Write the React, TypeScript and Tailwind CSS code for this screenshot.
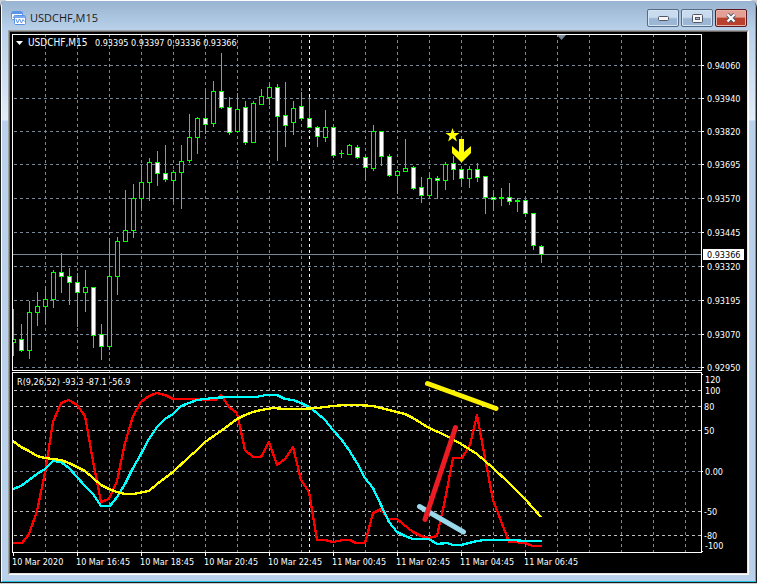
import { clsx } from 'clsx';

type Candle = [high: number, bodyTop: number, bodyBottom: number, low: number, filled: 0 | 1];

const GRID = '#778899';
const LIME = '#00ff00';

// One candle every 8px, starting at x = 13
const candles: Candle[] = [
  [309, 339, 342, 355, 0], [324, 339, 350, 351, 1], [301, 312, 350, 358, 0], [292, 306, 312, 325, 0],
  [286, 299, 306, 323, 0], [270, 272, 299, 307, 0], [253, 272, 276, 292, 1], [268, 276, 282, 304, 1],
  [273, 282, 292, 326, 1], [270, 287, 292, 311, 0], [287, 287, 335, 347, 1], [324, 334, 346, 359, 1],
  [238, 276, 346, 349, 0], [237, 241, 276, 294, 0], [190, 230, 241, 241, 0], [184, 198, 230, 237, 0],
  [165, 182, 198, 207, 0], [158, 162, 182, 200, 0], [151, 162, 173, 185, 1], [145, 173, 179, 181, 1],
  [170, 172, 180, 201, 0], [145, 161, 172, 208, 0], [114, 137, 160, 162, 0], [117, 118, 137, 153, 0],
  [90, 118, 124, 133, 1], [81, 91, 123, 126, 0], [53, 91, 107, 108, 1], [97, 107, 132, 134, 1],
  [93, 109, 131, 132, 0], [101, 107, 142, 144, 1], [101, 103, 142, 142, 0], [89, 96, 104, 104, 0],
  [84, 87, 97, 104, 0], [84, 87, 116, 160, 1], [82, 115, 125, 146, 1], [101, 108, 122, 134, 0],
  [92, 106, 118, 120, 1], [97, 118, 127, 127, 1], [126, 127, 136, 146, 1], [110, 127, 137, 141, 0],
  [126, 127, 155, 157, 1], [150, 153, 153, 157, 0], [144, 145, 154, 154, 0], [145, 147, 157, 158, 1],
  [155, 157, 167, 180, 1], [125, 131, 168, 170, 0], [131, 131, 156, 165, 1], [154, 156, 175, 176, 1],
  [170, 171, 175, 193, 0], [139, 168, 171, 171, 0], [166, 167, 188, 189, 1], [177, 187, 195, 202, 1],
  [173, 178, 195, 197, 0], [176, 178, 180, 198, 1], [162, 164, 180, 189, 0], [156, 163, 169, 179, 1],
  [167, 169, 178, 185, 1], [166, 169, 178, 187, 0], [163, 169, 177, 181, 1], [176, 176, 197, 213, 1],
  [193, 197, 199, 210, 1], [188, 197, 198, 205, 1], [183, 197, 201, 204, 1], [198, 200, 201, 211, 1],
  [199, 200, 213, 216, 1], [213, 213, 245, 249, 1], [245, 246, 254, 262, 1],
];

const prices = [
  { y: 65, label: '0.94060' },
  { y: 98, label: '0.93940' },
  { y: 131, label: '0.93820' },
  { y: 164, label: '0.93695' },
  { y: 198, label: '0.93570' },
  { y: 232, label: '0.93445' },
  { y: 266, label: '0.93320' },
  { y: 300, label: '0.93195' },
  { y: 334, label: '0.93070' },
  { y: 367, label: '0.92950' },
];

const levels = [
  { y: 390, color: '#c0c0c0' },
  { y: 406, color: '#c0c0c0' },
  { y: 430, color: '#c0c0c0' },
  { y: 471, color: GRID },
  { y: 511, color: '#c0c0c0' },
  { y: 535, color: '#c0c0c0' },
];

const levelLabels = [
  { x: 705, y: 379, label: '120' },
  { x: 705, y: 390, label: '100' },
  { x: 704, y: 406, label: '80' },
  { x: 704, y: 430, label: '50' },
  { x: 705, y: 471, label: '0.00' },
  { x: 704, y: 511, label: '-50' },
  { x: 704, y: 535, label: '-80' },
  { x: 705, y: 545, label: '-100' },
];

const times = [
  '10 Mar 2020', '10 Mar 16:45', '10 Mar 18:45', '10 Mar 20:45', '10 Mar 22:45',
  '11 Mar 00:45', '11 Mar 02:45', '11 Mar 04:45', '11 Mar 06:45',
];

const verticals = Array.from({ length: 21 }, (_, i) => 45 + i * 32);

const redLine =
  '13,543 22,543 29,534 37,511 45,473 53,422 61,403 69,400 77,405 85,416 93,461 101,502 109,499 117,481 125,443 133,416 141,402 149,396 157,393 165,395 173,399 197,399 205,400 216,400 221,395 229,407 237,413 245,450 253,457 261,457 269,442 277,465 285,459 293,447 301,480 309,492 317,540 325,540 333,542 343,540 350,540 356,543 365,543 373,513 381,509 388,519 397,519 403,524 413,532 421,536 429,538 437,536 445,500 453,458 462,458 470,445 477,415 485,458 493,500 509,542 515,542 525,543 533,546 542,546';
const cyanLine =
  '13,489 21,486 29,480 37,474 45,469 53,461 61,462 69,468 77,477 85,486 93,494 101,506 110,506 117,497 125,484 133,468 141,454 149,439 157,427 165,419 173,414 181,406 197,400 213,398 229,397 256,397 266,395 277,395 285,399 293,400 301,403 309,407 317,413 325,420 333,430 341,439 349,450 357,463 365,478 373,488 381,505 389,522 397,532 405,536 413,539 429,539 437,544 447,543 453,545 461,545 477,541 485,540 513,540 525,541 542,541';
const yellowLine =
  '13,441 21,447 29,451 37,456 45,458 61,460 69,463 77,467 85,471 93,478 101,485 109,489 117,492 125,494 133,494 149,491 157,484 165,478 173,472 189,457 197,450 205,442 221,431 237,419 245,415 253,412 261,410 273,408 285,409 301,409 317,408 333,406 345,405 357,405 373,406 381,408 389,410 397,412 405,414 413,418 421,423 429,428 445,435 461,444 477,454 493,468 509,483 525,499 541,517';

const chartText = "fill-white font-['DejaVu_Sans_Condensed','Noto_Sans',sans-serif] text-[9px]";

/**
 * VerticalGrid - dashed time lines plus the white day separator
 */
function VerticalGrid() {
  return (
    <g shapeRendering="crispEdges" strokeDasharray="3 3">
      {verticals.map((x) => (
        <path key={x} d={`M${x + 0.5} 34V552`} stroke={GRID} />
      ))}
      <path d="M309.5 34V552" stroke="#fff" />
    </g>
  );
}

function CandleBar({ candle, x }: { candle: Candle; x: number }) {
  const [high, top, bottom, low, filled] = candle;
  const height = bottom - top + 1;

  return (
    <g>
      <rect x={x} y={high} width="1" height={low - high + 1} fill={LIME} />
      <rect x={x - 2} y={top} width="5" height={height} fill={LIME} />
      {height > 2 && (
        <rect x={x - 1} y={top + 1} width="3" height={height - 2} fill={filled ? '#fff' : '#000'} />
      )}
    </g>
  );
}

/**
 * PriceChart - candles, price scale and signal marks
 */
function PriceChart() {
  return (
    <svg viewBox="10 32 737 340" className="block h-auto w-full" role="img" aria-label="USDCHF,M15">
      <defs>
        <clipPath id="pricePlot">
          <rect x="13" y="34" width="688" height="336" />
        </clipPath>
      </defs>
      <VerticalGrid />
      <g shapeRendering="crispEdges">
        {prices.map(({ y }) => (
          <path key={y} d={`M14 ${y + 0.5}H701`} stroke={GRID} strokeDasharray="3 3" />
        ))}
        <path d="M13 254.5H701" stroke={GRID} />
        <g clipPath="url(#pricePlot)">
          {candles.map((candle, i) => (
            <CandleBar key={i} candle={candle} x={13 + i * 8} />
          ))}
        </g>
        <rect x="12.5" y="34.5" width="689" height="336" fill="none" stroke="#fff" />
        {prices.map(({ y }) => (
          <path key={y} d={`M702 ${y + 0.5}h2`} stroke="#fff" />
        ))}
        <rect x="703" y="249" width="41" height="11" fill="#fff" />
      </g>

      <path d="M557 35h9l-4.500 5z" fill={GRID} />
      <path d="M557 40h1v3h-1z" fill={GRID} />
      <path d="M16 41h7l-3.500 4z" fill="#fff" />

      {/* Sell signal */}
      <path
        d="M452.500 128l1.700 5h5.300l-4.200 3.200 1.600 5.300-4.400-3.200-4.400 3.200 1.600-5.300-4.200-3.200h5.300z"
        fill="#ff0"
      />
      <path d="M459 139h5v13l7-6v7l-9.500 9.500L452 153v-7l7 6z" fill="#ff0" />

      <text x="28" y="46" className={clsx(chartText, 'text-[10px]!')}>USDCHF,M15</text>
      <text x="95" y="46" className={chartText}>0.93395 0.93397 0.93336 0.93366</text>
      {prices.map(({ y, label }) => (
        <text key={label} x="707" y={y + 4} className={chartText}>{label}</text>
      ))}
      <text x="707" y="258" className={clsx(chartText, 'fill-black!')}>0.93366</text>
    </svg>
  );
}

/**
 * OscillatorChart - R(9,26,52) lines with the time scale below
 */
function OscillatorChart() {
  return (
    <svg viewBox="10 372 737 201" className="block h-auto w-full" role="img" aria-label="R(9,26,52)">
      <VerticalGrid />
      <g shapeRendering="crispEdges">
        {levels.map(({ y, color }) => (
          <path key={y} d={`M14 ${y + 0.5}H701`} stroke={color} strokeDasharray="3 3" />
        ))}
        <g fill="none" strokeWidth="2.300" strokeLinejoin="round">
          <polyline points={redLine} stroke="#f00" />
          <polyline points={cyanLine} stroke="#0ff" />
          <polyline points={yellowLine} stroke="#ff0" />
        </g>
        <rect x="12.5" y="372.5" width="689" height="180" fill="none" stroke="#fff" />
        <path d="M702 374.500h1M702 471.500h1M702 551.500h1" stroke="#fff" />
        {times.map((time, i) => (
          <path key={time} d={`M${13.5 + i * 64} 553v3`} stroke="#fff" />
        ))}
      </g>

      {/* Hand-drawn divergence marks */}
      <g strokeWidth="5" strokeLinecap="round">
        <path d="M427.500 383.500L496 408.500" stroke="#fff200" />
        <path d="M419.500 506.500L463.500 532" stroke="#99d9ea" />
        <path d="M425 519.500L455.500 427.500" stroke="#ed1c24" />
      </g>

      <text x="17" y="385" className={chartText}>R(9,26,52) -93.3 -87.1 -56.9</text>
      {levelLabels.map(({ x, y, label }) => (
        <text key={label} x={x} y={y + 4} className={chartText}>{label}</text>
      ))}
      {times.map((time, i) => (
        <text key={time} x={12 + i * 64} y="565" className={chartText}>{time}</text>
      ))}
    </svg>
  );
}

function ChartIcon() {
  return (
    <svg width="15" height="14" viewBox="0 0 15 14" aria-hidden="true">
      <rect x=".5" y=".5" width="11" height="8" rx="1" fill="#fff" stroke="#5b93e6" />
      <path d="M1 2h10" stroke="#5b93e6" strokeWidth="2" />
      <path d="M2 7l2-3 2 3" fill="none" stroke="#5b93e6" />
      <rect x="3.500" y="4.500" width="11" height="9" rx="1" fill="#fff" stroke="#5b93e6" />
      <path d="M4 6h10" stroke="#78a8ee" strokeWidth="2" />
      <path d="M5 8l1.500 4L8.500 8l2 4 1.500-3.500 1.500 2" fill="none" stroke="#5b93e6" />
    </svg>
  );
}

const frameButton =
  'flex h-[18px] w-8 items-center justify-center rounded-[2px] border border-[#566b84] bg-linear-to-b from-[#c9dbee] from-45% to-[#9bb7d5] to-55% shadow-[inset_0_0_0_1px_#d5e4f3]';

function TitleBar() {
  return (
    <header className="flex h-[29px] items-center bg-linear-to-b from-[#99b4d1] to-[#b9d1ea] pt-[5px] pr-2 pl-[9px]">
      <ChartIcon />
      <h1 className="ml-1 flex-1 font-['Open_Sans','Noto_Sans',sans-serif] text-[11px] text-[#1b1b1b]">USDCHF,M15</h1>
      <div className="flex gap-[2px]">
        <button type="button" aria-label="Minimize" className={frameButton}>
          <svg width="11" height="6" viewBox="0 0 11 6">
            <rect x=".5" y="1.500" width="10" height="4" rx="1" fill="#f6f6f6" stroke="#535666" />
          </svg>
        </button>
        <button type="button" aria-label="Maximize" className={frameButton}>
          <svg width="11" height="9" viewBox="0 0 11 9">
            <rect x=".5" y=".5" width="10" height="8" rx="1" fill="#f6f6f6" stroke="#535666" />
            <rect x="3.500" y="3.500" width="4" height="2" fill="#a9c1dc" stroke="#535666" />
          </svg>
        </button>
        <button
          type="button"
          aria-label="Close"
          className="flex h-[18px] w-8 items-center justify-center rounded-[2px] border border-[#5a1a20] bg-linear-to-b from-[#e3a094] from-45% to-[#b8402c] to-50% shadow-[inset_0_0_0_1px_#e9b0a6]"
        >
          <svg width="12" height="10" viewBox="0 0 12 10">
            <path d="M2.500 1.500l7 7M9.500 1.500l-7 7" stroke="#535666" strokeWidth="4" />
            <path d="M2.500 1.500l7 7M9.500 1.500l-7 7" stroke="#fff" strokeWidth="2.200" />
          </svg>
        </button>
      </div>
    </header>
  );
}

export default function App() {
  return (
    <div className="bg-[#c9ced3] pb-px">
      <main className="rounded-t-lg border border-t-0 border-[#1c1c1c] bg-[#b9d1ea]">
        <div className="rounded-t-md border-t border-r border-b border-l border-t-white border-r-[#1fc0e0] border-b-[#1fc0e0] border-l-white">
          <TitleBar />
          <div className="bg-[linear-gradient(#b9d1ea,#e1ecf8_90px,#b9d1ea_91px)] px-[6px] pb-[6px]">
            <div className="border-t border-r border-b border-l border-t-[#a0a0a0] border-r-white border-b-white border-l-[#a0a0a0]">
              <div className="border-t border-r border-b border-l border-t-[#696969] border-r-[#e3e3e3] border-b-[#e3e3e3] border-l-[#696969] bg-black">
                <PriceChart />
                <OscillatorChart />
              </div>
            </div>
          </div>
        </div>
      </main>
    </div>
  );
}
